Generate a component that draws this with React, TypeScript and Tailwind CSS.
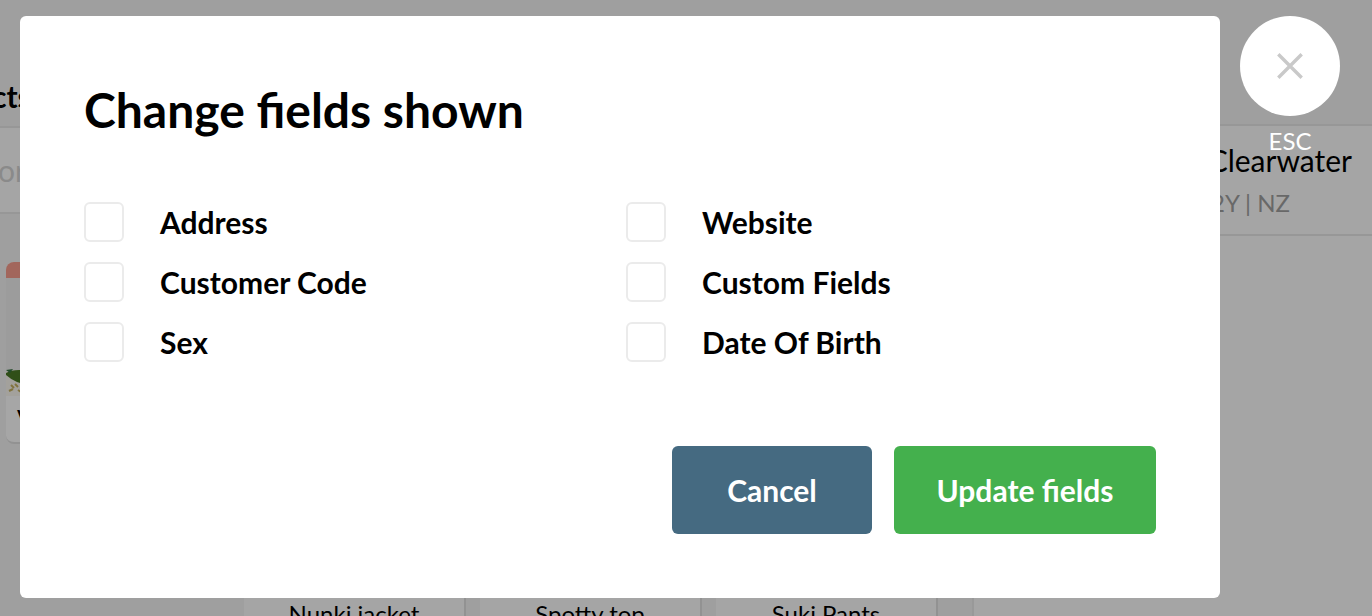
import React from "react";

const fields = [
  { id: "address", label: "Address" },
  { id: "website", label: "Website" },
  { id: "customer-code", label: "Customer Code" },
  { id: "custom-fields", label: "Custom Fields" },
  { id: "sex", label: "Sex" },
  { id: "date-of-birth", label: "Date Of Birth" },
];

const products = ["Nunki jacket", "Spotty top", "Suki Pants"];

function FeaturedCard() {
  return (
    <article className="w-[222px] shrink-0 overflow-hidden rounded-lg border-b-2 border-[#929292] bg-[#a6a6a6]">
      <div className="h-4 bg-[#a2665c]" />
      <svg
        className="block h-[118px] w-full bg-[#9c9c9c]"
        viewBox="0 0 222 118"
        preserveAspectRatio="xMinYMin slice"
        aria-hidden="true"
      >
        <path d="M0 0H222V118H0Z" fill="#9c9c9c" />
        <path d="M0 92L20 100V118H0Z" fill="#a3a19c" />
        <path d="M0 95Q8 90 24 93V107Q10 106 0 97Z" fill="#304f18" />
        <path d="M0 92L7 91L4 95Z" fill="#244c2b" />
        <path d="M5 107L8 110M9 106L12 109M3 113L7 111M12 112L15 114" stroke="#81733f" strokeWidth="2" />
      </svg>
      <p className="h-[46px] pt-1.5 pl-[11px] text-[26px]/[36px] text-black">V</p>
    </article>
  );
}

function RegisterPage() {
  return (
    <div className="absolute inset-0 flex overflow-hidden bg-[#9f9f9f]" aria-hidden="true">
      <section className="flex min-w-0 flex-1 flex-col">
        <header className="flex h-32 shrink-0 items-end border-b-2 border-[#979797] pb-2.5">
          <h2 className="-ml-2 text-[30px]/[40px] font-bold text-black">cts</h2>
        </header>
        <div className="flex h-[86px] shrink-0 items-center border-b-2 border-[#979797] bg-[#a5a5a5]">
          <span className="-ml-0.5 text-[30px]/[40px] text-[#8a8a8a]">or</span>
        </div>
        <div className="flex shrink-0 pt-12 pl-1.5">
          <FeaturedCard />
        </div>
        <ul className="mt-[54px] flex shrink-0 gap-3.5 pl-[244px]">
          {products.map((name) => (
            <li
              key={name}
              className="flex h-[220px] w-[222px] shrink-0 items-start justify-center border-r-2 border-[#929292] bg-[#a5a5a5] pt-[98px] text-2xl/[36px] text-black"
            >
              {name}
            </li>
          ))}
        </ul>
      </section>
      <aside className="flex w-[400px] shrink-0 flex-col">
        <div className="h-[126px] shrink-0 border-b-2 border-[#979797]" />
        <div className="flex h-[110px] shrink-0 flex-col border-b-2 border-l-2 border-[#979797] bg-[#a5a5a5] pt-3.5 pr-5">
          <p className="text-right text-[30px]/[40px] text-black">Clearwater</p>
          <p className="mt-1 pr-[62px] text-right text-2xl/[38px] text-[#686868]">2Y | NZ</p>
        </div>
        <div className="flex-1 border-l-2 border-[#999999] bg-[#a5a5a5]" />
      </aside>
    </div>
  );
}

function FieldOption({ id, label }: { id: string; label: string }) {
  return (
    <div className="flex items-center gap-9">
      <input
        id={id}
        type="checkbox"
        className="size-10 shrink-0 appearance-none rounded-md border-2 border-[#ebebeb] bg-white checked:bg-[#44b04d]"
      />
      <label htmlFor={id} className="text-[30px]/[40px] font-bold">
        {label}
      </label>
    </div>
  );
}

export default function App() {
  return (
    <main className="relative min-h-screen font-['Lato',sans-serif] text-black">
      <RegisterPage />
      <div className="relative flex items-start gap-5 pt-4 pr-8 pb-4 pl-5">
        <form
          role="dialog"
          aria-labelledby="dialog-title"
          className="min-w-0 flex-1 rounded-md bg-white p-16"
          onSubmit={(event) => event.preventDefault()}
        >
          <h1 id="dialog-title" className="text-5xl/[60px] font-bold">
            Change fields shown
          </h1>
          <div className="mt-[62px] grid grid-cols-2 gap-x-3 gap-y-5">
            {fields.map((field) => (
              <FieldOption key={field.id} {...field} />
            ))}
          </div>
          <div className="mt-[84px] flex justify-end gap-[22px] text-[30px]/[40px] font-bold text-white">
            <button type="button" className="h-[88px] w-[200px] rounded-md bg-[#456a81]">
              Cancel
            </button>
            <button type="submit" className="h-[88px] w-[262px] rounded-md bg-[#44b04d]">
              Update fields
            </button>
          </div>
        </form>
        <button type="button" className="flex w-[100px] shrink-0 flex-col items-center text-2xl/[34px] text-white">
          <span className="mb-2 flex size-[100px] items-center justify-center rounded-full bg-white">
            <svg className="size-[26px]" viewBox="0 0 26 26" aria-hidden="true">
              <path d="M1.3 1.3L24.7 24.7M24.7 1.3L1.3 24.7" stroke="#c9c9c9" strokeWidth="3.4" />
            </svg>
          </span>
          ESC
        </button>
      </div>
    </main>
  );
}
